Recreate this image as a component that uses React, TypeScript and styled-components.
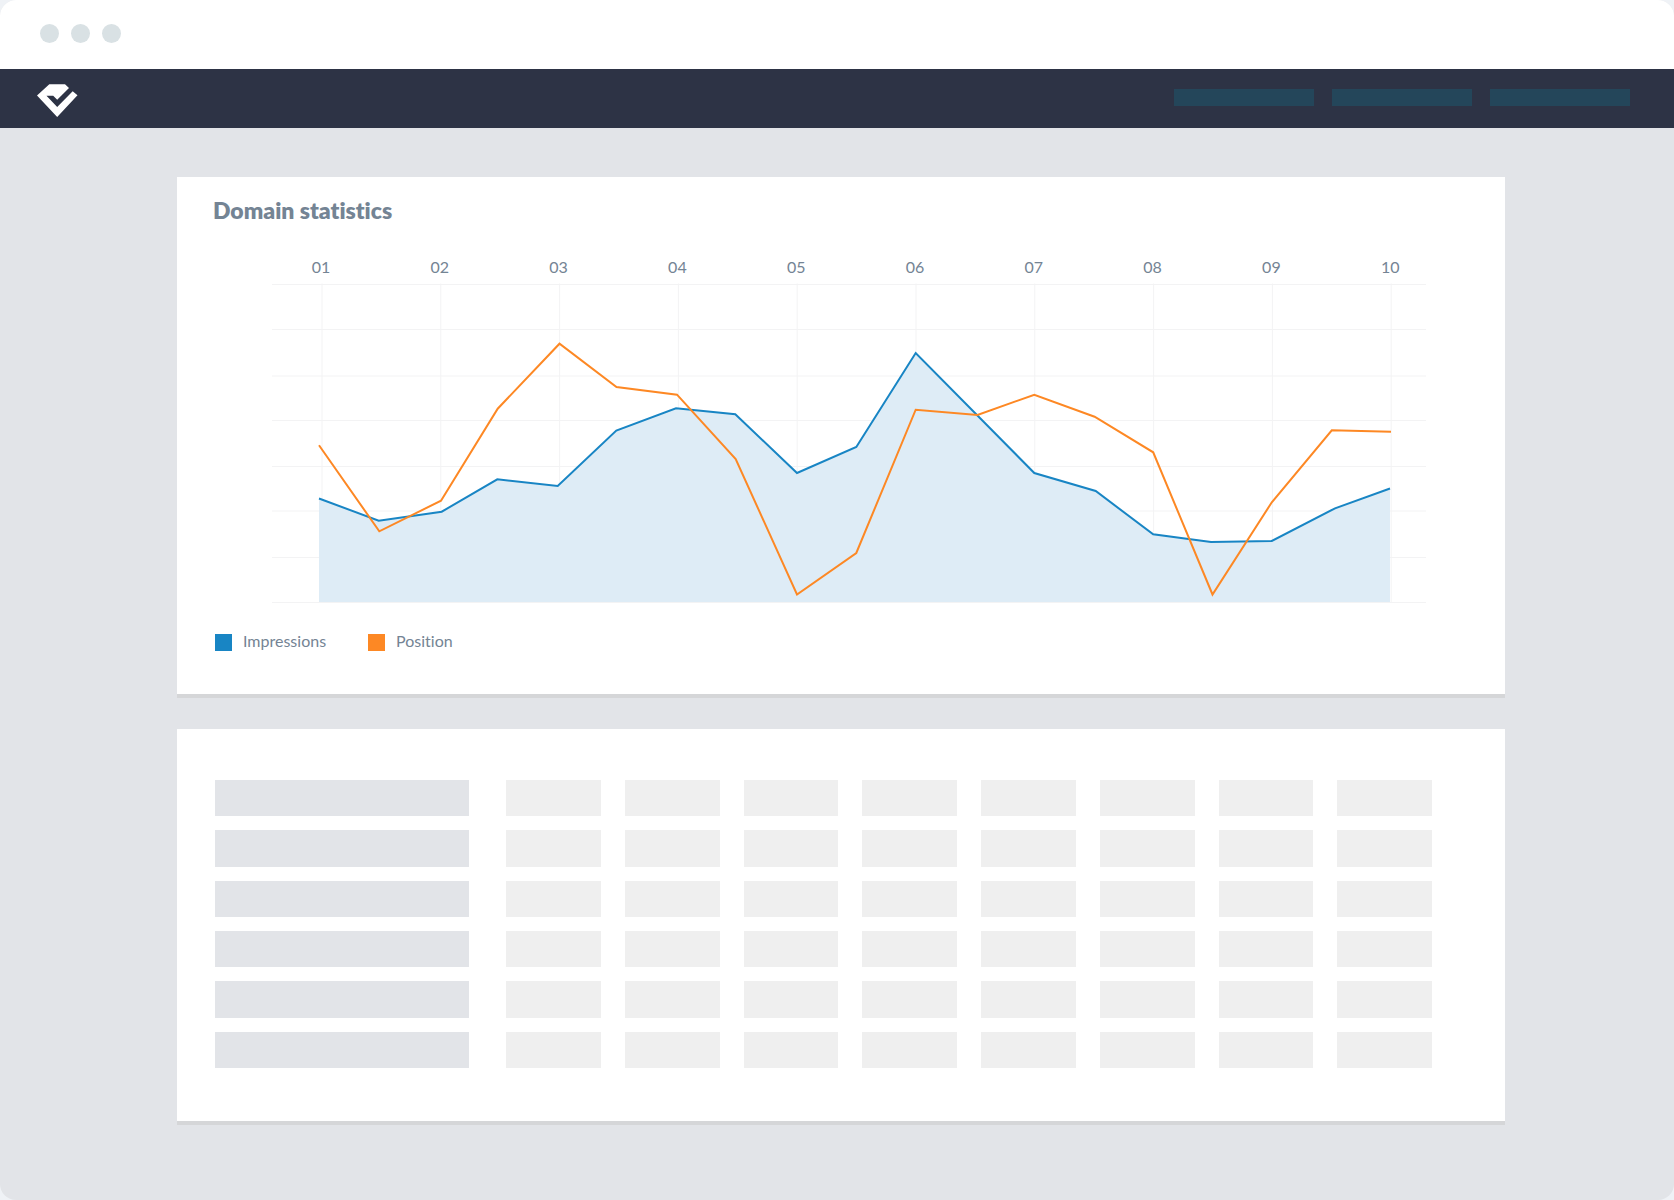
import React from "react";
import styled, { createGlobalStyle } from "styled-components";

const GlobalStyle = createGlobalStyle`
  *, *::before, *::after { box-sizing: border-box; }
  body {
    margin: 0;
    background: #eff2f6;
    font-family: Lato, "Open Sans", sans-serif;
    font-variant-ligatures: none;
    color: #748494;
  }
`;

const Frame = styled.div`
  display: flex;
  flex-direction: column;
  min-height: 100vh;
  border-radius: 16px;
  overflow: hidden;
  background: #e2e4e8;
`;

const TitleBar = styled.div`
  display: flex;
  align-items: center;
  gap: 12px;
  height: 69px;
  padding: 0 40px 2px;
  background: #ffffff;
`;

const WindowDot = styled.span`
  width: 19px;
  height: 19px;
  border-radius: 50%;
  background: #d9e1e4;
`;

const NavBar = styled.header`
  display: flex;
  justify-content: space-between;
  align-items: flex-start;
  height: 59px;
  padding: 15px 44px 0 37px;
  background: #2d3345;
`;

const Logo = styled.svg`
  display: block;
  width: 41px;
  height: 33px;
`;

const NavItems = styled.nav`
  display: flex;
  gap: 18px;
  padding-top: 5px;
`;

const NavPlaceholder = styled.span`
  width: 140px;
  height: 17px;
  background: #24465a;
`;

const Content = styled.main`
  display: flex;
  flex: 1;
  flex-direction: column;
  gap: 35px;
  padding: 49px 169px 79px 177px;
`;

const Card = styled.section`
  background: #ffffff;
  box-shadow: 0 4px 0 #d5d6d8;
`;

const ChartCard = styled(Card)`
  padding: 17px 79px 43px 36px;
`;

const TableCard = styled(Card)`
  padding: 51px 73px 53px 38px;
`;

const Heading = styled.h2`
  margin: 0;
  font-size: 23px;
  line-height: 32px;
  font-weight: 800;
`;

const ChartArea = styled.div`
  padding: 28px 0 27px 59px;
`;

const Chart = styled.svg`
  display: block;
  width: 100%;
  height: auto;
  fill: none;
`;

const GridLine = styled.path`
  stroke: #f3f3f4;
`;

const AxisLabel = styled.text`
  fill: #748494;
  font-size: 16px;
  text-anchor: middle;
`;

const SeriesLine = styled.polyline<{ $color: string }>`
  stroke: ${(p) => p.$color};
  stroke-width: 2;
`;

const SeriesArea = styled.polygon`
  fill: #deecf6;
`;

const Legend = styled.ul`
  display: flex;
  gap: 42px;
  margin: 0;
  padding: 0 0 0 2px;
  list-style: none;
`;

const LegendItem = styled.li`
  display: flex;
  align-items: flex-end;
  gap: 11px;
  font-size: 16px;
  line-height: 20px;
`;

const Swatch = styled.span<{ $color: string }>`
  width: 17px;
  height: 17px;
  background: ${(p) => p.$color};
`;

const Rows = styled.div`
  display: grid;
  grid-template-rows: repeat(6, 1fr);
  gap: 14px;
  height: 288px;
`;

const Row = styled.div`
  display: grid;
  grid-template-columns: 254px 1fr;
  gap: 37px;
`;

const Cells = styled.div`
  display: grid;
  grid-template-columns: repeat(8, 1fr);
  gap: 24px;
`;

const Cell = styled.span<{ $lead?: boolean }>`
  background: ${(p) => (p.$lead ? "#e2e4e8" : "#efefef")};
`;

const BLUE = "#1885c4";
const ORANGE = "#fd8824";

const PLOT_WIDTH = 1154;
const PLOT_BASE = 318;
const FIRST_COLUMN = 50;
const COLUMN_STEP = 118.8;

const labels = ["01", "02", "03", "04", "05", "06", "07", "08", "09", "10"];
const rowLines = [0.5, 45.5, 92, 136.5, 182.5, 227, 273.5, 318.5];

const impressions = [
  [47, 214.5], [106.7, 236.7], [169.7, 227.7], [225.3, 195.3], [285.7, 202],
  [344.3, 146.5], [404, 124.3], [463.3, 130.3], [525, 189], [584.3, 163],
  [643.7, 69], [762.3, 189], [823.7, 207], [881.2, 250.3], [939, 258],
  [999.8, 257], [1063, 224.3], [1118, 204.5],
];

const position = [
  [47, 161.3], [107.3, 247.3], [169, 216.7], [225.7, 124.7], [287.5, 59.7],
  [344.5, 103], [405, 110.7], [463.7, 175], [525, 310.5], [584.3, 269],
  [643.7, 125.7], [705.5, 131], [762.3, 110.7], [822.6, 132.7], [881.2, 168.3],
  [940.5, 310.5], [999.8, 218.3], [1059.8, 146.3], [1119, 147.7],
];

const toPoints = (points: number[][]) => points.map((p) => p.join(",")).join(" ");

function StatisticsChart() {
  return (
    <Chart
      viewBox={`0 -30 ${PLOT_WIDTH} 350`}
      role="img"
      aria-label="Impressions and position over ten periods"
    >
      {labels.map((label, i) => {
        const x = FIRST_COLUMN + i * COLUMN_STEP;
        return (
          <g key={label}>
            <AxisLabel x={x - 1} y={-11}>{label}</AxisLabel>
            <GridLine d={`M${x} -0.5V${PLOT_BASE}`} />
          </g>
        );
      })}
      {rowLines.map((y) => (
        <GridLine key={y} d={`M0 ${y}H${PLOT_WIDTH}`} />
      ))}
      <SeriesArea points={`47,${PLOT_BASE} ${toPoints(impressions)} 1118,${PLOT_BASE}`} />
      <SeriesLine $color={BLUE} points={toPoints(impressions)} />
      <SeriesLine $color={ORANGE} points={toPoints(position)} />
    </Chart>
  );
}

export default function App() {
  return (
    <>
      <GlobalStyle />
      <Frame>
        <TitleBar aria-hidden="true">
          <WindowDot />
          <WindowDot />
          <WindowDot />
        </TitleBar>
        <NavBar>
          <Logo viewBox="0 0 41 33" fill="#ffffff" aria-hidden="true">
            <path d="M0 11.5 12.3 0.3H28L32 3.9 20.2 15.7 16.2 11.7H9.5L20.2 23 35.7 7.2 40.5 11.3 20.2 33Z" />
          </Logo>
          <NavItems aria-hidden="true">
            <NavPlaceholder />
            <NavPlaceholder />
            <NavPlaceholder />
          </NavItems>
        </NavBar>
        <Content>
          <ChartCard>
            <Heading>Domain statistics</Heading>
            <ChartArea>
              <StatisticsChart />
            </ChartArea>
            <Legend>
              <LegendItem><Swatch $color={BLUE} />Impressions</LegendItem>
              <LegendItem><Swatch $color={ORANGE} />Position</LegendItem>
            </Legend>
          </ChartCard>
          <TableCard aria-hidden="true">
            <Rows>
              {Array.from({ length: 6 }, (_, row) => (
                <Row key={row}>
                  <Cell $lead />
                  <Cells>
                    {Array.from({ length: 8 }, (_, cell) => (
                      <Cell key={cell} />
                    ))}
                  </Cells>
                </Row>
              ))}
            </Rows>
          </TableCard>
        </Content>
      </Frame>
    </>
  );
}
